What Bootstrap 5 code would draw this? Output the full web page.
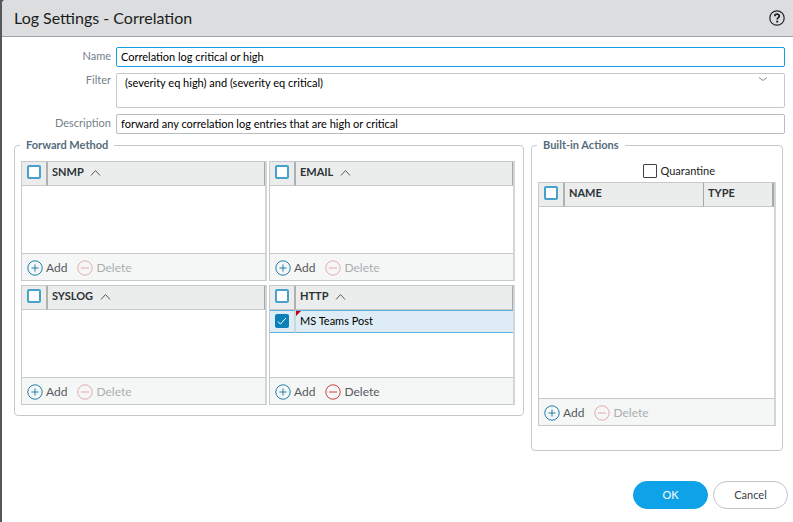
<!DOCTYPE html>
<html lang="en">
<head>
<meta charset="utf-8">
<meta name="viewport" content="width=device-width, initial-scale=1">
<title>Log Settings - Correlation</title>
<link href="https://cdn.jsdelivr.net/npm/bootstrap@5.3.0/dist/css/bootstrap.min.css" rel="stylesheet">
<style>
body { font-family: Lato, sans-serif; font-size: 11px; line-height: 16px; color: #222; background: #55575a; }
.dialog { margin-left: 2px; min-height: 100vh; background: #fff; border-top-left-radius: 4px; }
.dialog-head { height: 37px; padding: 0 8px 0 12px; background: #dcddde; border-bottom: 1px solid #9aa6ac; border-top-left-radius: 4px; }
.dialog-title { font-size: 16px; line-height: 20px; font-weight: 400; color: #1b1e20; }
.help { width: 16px; height: 16px; }
.fields { padding: 10px 8px 0 8px; display: grid; grid-template-columns: 101px 1fr; column-gap: 5px; row-gap: 6px; }
.fields label { text-align: right; color: #75808a; padding-top: 1px; }
.fields .label-area { padding-top: 0; line-height: 14px; }
.field { border: 1px solid #b9bdc0; border-radius: 2px; padding: 0 4px 2px; height: 20px; min-height: 0; font-size: 11px; line-height: 16px; color: #000; background: #fff; }
.field:focus { box-shadow: none; border-color: #129ee2; }
.field-active { border-color: #129ee2; }
.field-area { height: 35px; padding: 1px 8px; resize: none; overflow: hidden; border-color: #c6c9cb; display: block; }
.drop { top: 0; right: 16px; width: 12px; height: 12px; }
.groups { padding: 3px 10px 0 12px; gap: 7px; }
fieldset.group { border: 1px solid #c6c9cb; border-radius: 4px; padding: 8px 6px 10px; min-width: 0; }
.group legend { float: none; width: auto; margin: 0 0 0 -1px; padding: 0 6px; font-size: 11px; line-height: 16px; font-weight: 700; color: #566b79; }
.group-side { flex: 0 0 252px; }
.methods { display: grid; grid-template-columns: 1fr 1fr; gap: 4px 2px; padding-right: 2px; }
.pane { border: 1px solid #c6c9cb; border-right-width: 2px; border-right-color: #d3d6d7; }
.pane-body { min-height: 91px; }
.pane-tall .pane-body { min-height: 215px; }
.pane table { width: 100%; table-layout: fixed; border-collapse: separate; border-spacing: 0; }
.pane th { height: 24px; padding: 0 4px 3px; background: #ebedec; border-bottom: 1px solid #c6c9cb; border-right: 1px solid #a4a9ad; font-size: 11px; line-height: 16px; font-weight: 700; color: #2c3337; white-space: nowrap; }
.pane th:first-child { width: 26px; padding-left: 5px; border-right: 2px solid #adb1b4; }
.pane td { height: 23px; padding: 0 4px 1px; background: #deedf5; border-top: 1px solid #5cb0da; border-bottom: 1px solid #5cb0da; color: #000; }
.pane td:first-child { padding-left: 5px; border-right: 2px solid #ccd7dc; }
.pane .type-head { width: 70px; border-right-width: 2px; }
.changed::before { content: ""; position: absolute; left: 0; top: 0; border-top: 5px solid #c4000a; border-right: 5px solid transparent; }
.caret-up { width: 11px; height: 8px; margin-left: 4px; }
.tick { appearance: none; display: block; width: 14px; height: 14px; margin: 0; border: 2px solid #46a1cd; border-radius: 2px; background: #fff; }
.tick:checked { border-color: #0a7fb8; background: #0a7fb8 url("data:image/svg+xml,%3Csvg xmlns='http://www.w3.org/2000/svg' viewBox='0 0 10 10'%3E%3Cpath d='M.8 5.6 3.4 8 9 2' fill='none' stroke='%23fff'/%3E%3C/svg%3E") center / 10px 10px no-repeat; }
.tick-dark { border: 1px solid #3d4145; border-radius: 1px; }
.pane-foot { height: 27px; padding: 1px 5px 0; background: #f5f7f6; border-top: 1px solid #c6c9cb; gap: 10px; }
.action { border: 0; padding: 0; background: none; display: flex; align-items: center; gap: 3px; font-size: 12px; line-height: 16px; color: #55595d; }
.action svg { width: 16px; height: 16px; fill: none; }
.i-add { stroke: #1f7ea8; } .i-del { stroke: #cc3f44; }
.action:disabled { color: #abaeb0; } .action:disabled svg { opacity: .4; }
.quarantine { padding: 2px 61px 3px 0; gap: 4px; }
.dialog-foot { padding: 30px 5px 13px; gap: 5px; }
.pill { width: 75px; height: 28px; padding: 0; border-radius: 14px; font-size: 11px; line-height: 16px; }
.pill-ok, .pill-ok:hover { background: #0ea3e8; border-color: #0ea3e8; color: #fff; }
.pill-cancel { background: #fff; border-color: #c1c4c6; color: #3b4044; }
</style>
<script src="https://cdn.jsdelivr.net/npm/bootstrap@5.3.0/dist/js/bootstrap.bundle.min.js"></script>
</head>
<body>
<svg class="d-none" xmlns="http://www.w3.org/2000/svg">
  <symbol id="plus" viewBox="0 0 16 16"><circle cx="8" cy="8" r="7.2"/><path d="M8 4.5v7M4.5 8h7"/></symbol>
  <symbol id="minus" viewBox="0 0 16 16"><circle cx="8" cy="8" r="7.2"/><path d="M4 8h8"/></symbol>
  <symbol id="up" viewBox="0 0 11 8"><path d="M1 6.5 5.5 1.5 10 6.5" fill="none" stroke="#555b60"/></symbol>
</svg>
<main class="dialog">
  <header class="dialog-head d-flex align-items-center justify-content-between">
    <h1 class="dialog-title m-0">Log Settings - Correlation</h1>
    <button type="button" class="btn p-0 border-0 d-flex" aria-label="Help">
      <svg class="help" viewBox="0 0 16 16" fill="none" stroke="#202225"><circle cx="8" cy="8" r="7.2" stroke-width="1.2"/><path d="M5.8 6.3C5.8 3.4 10.3 3.4 10.3 6.1 10.3 7.6 8.2 7.7 8.2 9.4" stroke-width="1.8"/><path d="M8.2 10.7v1.8" stroke-width="2"/></svg>
    </button>
  </header>
  <form>
    <div class="fields">
      <label for="name">Name</label>
      <input id="name" type="text" class="form-control field field-active" value="Correlation log critical or high">
      <label for="filter" class="label-area">Filter</label>
      <div class="position-relative">
        <textarea id="filter" class="form-control field field-area">(severity eq high) and (severity eq critical)</textarea>
        <button type="button" class="drop btn p-0 border-0 position-absolute d-flex" aria-label="Show filters"><svg width="12" height="12" viewBox="0 0 12 12" fill="none" stroke="#858b90"><path d="M2 4.5 6 7.5 10 4.5"/></svg></button>
      </div>
      <label for="description">Description</label>
      <input id="description" type="text" class="form-control field" value="forward any correlation log entries that are high or critical">
    </div>
    <div class="groups d-flex align-items-start">
      <fieldset class="group flex-grow-1">
        <legend>Forward Method</legend>
        <div class="methods">
          <section class="pane">
            <div class="pane-body"><table><thead><tr><th><input type="checkbox" class="tick" aria-label="Select all SNMP"></th><th>SNMP <svg class="caret-up"><use href="#up"/></svg></th></tr></thead></table></div>
            <div class="pane-foot d-flex"><button type="button" class="action"><svg class="i-add"><use href="#plus"/></svg>Add</button><button type="button" class="action" disabled><svg class="i-del"><use href="#minus"/></svg>Delete</button></div>
          </section>
          <section class="pane">
            <div class="pane-body"><table><thead><tr><th><input type="checkbox" class="tick" aria-label="Select all email"></th><th>EMAIL <svg class="caret-up"><use href="#up"/></svg></th></tr></thead></table></div>
            <div class="pane-foot d-flex"><button type="button" class="action"><svg class="i-add"><use href="#plus"/></svg>Add</button><button type="button" class="action" disabled><svg class="i-del"><use href="#minus"/></svg>Delete</button></div>
          </section>
          <section class="pane">
            <div class="pane-body"><table><thead><tr><th><input type="checkbox" class="tick" aria-label="Select all syslog"></th><th>SYSLOG <svg class="caret-up"><use href="#up"/></svg></th></tr></thead></table></div>
            <div class="pane-foot d-flex"><button type="button" class="action"><svg class="i-add"><use href="#plus"/></svg>Add</button><button type="button" class="action" disabled><svg class="i-del"><use href="#minus"/></svg>Delete</button></div>
          </section>
          <section class="pane">
            <div class="pane-body"><table><thead><tr><th><input type="checkbox" class="tick" aria-label="Select all HTTP"></th><th>HTTP <svg class="caret-up"><use href="#up"/></svg></th></tr></thead>
              <tbody><tr><td><input type="checkbox" class="tick" aria-label="Select MS Teams Post" checked></td><td class="changed position-relative">MS Teams Post</td></tr></tbody></table></div>
            <div class="pane-foot d-flex"><button type="button" class="action"><svg class="i-add"><use href="#plus"/></svg>Add</button><button type="button" class="action"><svg class="i-del"><use href="#minus"/></svg>Delete</button></div>
          </section>
        </div>
      </fieldset>
      <fieldset class="group group-side pb-4">
        <legend>Built-in Actions</legend>
        <div class="quarantine d-flex justify-content-end align-items-center">
          <input id="quarantine" type="checkbox" class="tick tick-dark"><label for="quarantine">Quarantine</label>
        </div>
        <section class="pane pane-tall">
          <div class="pane-body"><table><thead><tr><th><input type="checkbox" class="tick" aria-label="Select all actions"></th><th>NAME</th><th class="type-head">TYPE</th></tr></thead></table></div>
          <div class="pane-foot d-flex"><button type="button" class="action"><svg class="i-add"><use href="#plus"/></svg>Add</button><button type="button" class="action" disabled><svg class="i-del"><use href="#minus"/></svg>Delete</button></div>
        </section>
      </fieldset>
    </div>
    <footer class="dialog-foot d-flex justify-content-end">
      <button type="submit" class="btn pill pill-ok">OK</button>
      <button type="button" class="btn pill pill-cancel">Cancel</button>
    </footer>
  </form>
</main>
</body>
</html>
